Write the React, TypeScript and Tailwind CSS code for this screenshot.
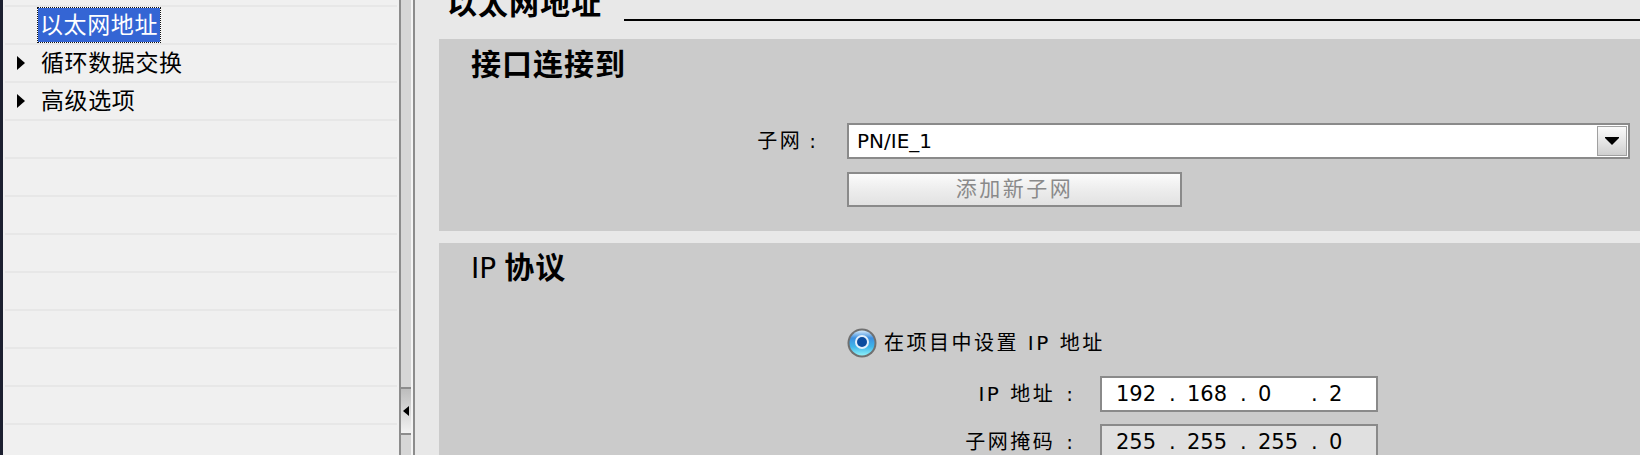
import React from "react";

const treeItems = [
  { label: "以太网地址", selected: true, caret: false },
  { label: "循环数据交换", selected: false, caret: true },
  { label: "高级选项", selected: false, caret: true },
];

function Caret() {
  return (
    <svg width="8" height="14" viewBox="0 0 8 14" className="shrink-0">
      <path d="M0 0L8 7L0 14Z" fill="#000" />
    </svg>
  );
}

function TreeRow({ label, selected, caret }: { label: string; selected: boolean; caret: boolean }) {
  return (
    <div className="flex h-[38px] items-center border-b-2 border-[#e7e7e7] pl-[12px]">
      {caret ? <Caret /> : <span className="w-[8px]" />}
      {selected ? (
        <span className="ml-[12px] flex h-[36px] items-center bg-white">
          <span className="flex h-full items-center border border-dotted border-[#111] bg-[#3465d4] bg-clip-padding px-[2px] text-[23px] leading-none tracking-[0.6px] text-white">
            {label}
          </span>
        </span>
      ) : (
        <span className="ml-[16px] text-[23px] leading-none tracking-[0.6px]">{label}</span>
      )}
    </div>
  );
}

function Octets({ parts }: { parts: string[] }) {
  return (
    <div className="flex items-center pl-[14px] font-['DejaVu_Sans',sans-serif] text-[21px] leading-none">
      {parts.map((p, i) => (
        <React.Fragment key={i}>
          <span className="w-[53px]">{p}</span>
          {i < parts.length - 1 && <span className="w-[18px]">.</span>}
        </React.Fragment>
      ))}
    </div>
  );
}

function Radio() {
  return (
    <svg width="30" height="30" viewBox="0 0 30 30" className="shrink-0">
      <defs>
        <linearGradient id="radioFill" x1="0" y1="0" x2="0" y2="1">
          <stop offset="0" stopColor="#d6ebfb" />
          <stop offset="0.3" stopColor="#3c8fe0" />
          <stop offset="0.65" stopColor="#3fb6ea" />
          <stop offset="1" stopColor="#8ef0f8" />
        </linearGradient>
      </defs>
      <circle cx="15" cy="15" r="14.5" fill="#707070" />
      <circle cx="15" cy="15" r="12.5" fill="url(#radioFill)" />
      <circle cx="15" cy="14" r="7" fill="#e3f1fc" />
      <circle cx="15" cy="14" r="5" fill="#0b4c9e" />
    </svg>
  );
}

export default function App() {
  return (
    <div className="flex h-[455px] w-[1640px] overflow-hidden bg-[#e8e8e8] font-['DejaVu_Sans','Noto_Sans_CJK_SC',sans-serif] text-black">
      {/* project tree */}
      <nav className="w-[399px] shrink-0 border-l-[3px] border-[#1c2030] bg-[#f0f0f0] px-[2px]">
        <div className="h-[7px] border-b-2 border-[#e7e7e7]" />
        {treeItems.map((item) => (
          <TreeRow key={item.label} {...item} />
        ))}
        {Array.from({ length: 10 }).map((_, i) => (
          <div key={i} className="h-[38px] border-b-2 border-[#e7e7e7]" />
        ))}
      </nav>

      {/* splitter */}
      <div className="flex shrink-0">
        <div className="w-[2px] bg-[#8c8c8c]" />
        <div className="w-[10px] bg-[#d6d6d6] pt-[387px]">
          <div className="flex h-[48px] items-center justify-center border-y-2 border-[#8c8c8c] bg-linear-to-b from-[#bdbdbd] to-[#f2f2f2]">
            <svg width="6" height="10" viewBox="0 0 6 10">
              <path d="M6 0L0 5L6 10Z" fill="#000" />
            </svg>
          </div>
        </div>
        <div className="w-[2px] bg-[#f4f4f4]" />
        <div className="w-[2px] bg-[#8c8c8c]" />
      </div>

      {/* properties */}
      <main className="min-w-0 flex-1 pl-[24px]">
        <div className="-mt-[11px] flex items-end pl-[8px]">
          <h1 className="text-[30px] font-bold leading-[30px] tracking-[1px]">以太网地址</h1>
          <div className="mb-[-2px] ml-[22px] h-[2px] flex-1 bg-black" />
        </div>

        <section className="mt-[20px] h-[192px] bg-[#cbcbcb] pl-[32px] pt-[11px]">
          <h2 className="text-[30px] font-bold leading-[30px] tracking-[1px]">接口连接到</h2>
          <div className="mt-[43px] flex items-center">
            <div className="flex w-[345px] justify-end text-[20px] leading-none tracking-[2.5px]">
              <span>子网</span>
              <span className="ml-[7px] tracking-normal">:</span>
            </div>
            <div className="ml-[31px] flex h-[36px] w-[783px] items-stretch border-2 border-[#8a8a8a] bg-white">
              <div className="flex flex-1 items-center pl-[8px] font-['DejaVu_Sans',sans-serif] text-[20px] leading-none">
                PN/IE_1
              </div>
              <div className="m-[1px] flex w-[30px] items-center justify-center border border-[#a0a0a0] bg-linear-to-b from-[#fafafa] via-[#e6e6e6] to-[#cfcfcf]">
                <svg width="14" height="8" viewBox="0 0 14 8">
                  <path d="M0 0H14V1L7 8L0 1Z" fill="#000" />
                </svg>
              </div>
            </div>
          </div>
          <button className="ml-[376px] mt-[13px] flex h-[35px] w-[335px] items-center justify-center border-2 border-[#8a8a8a] bg-linear-to-b from-[#fbfbfb] via-[#ededed] to-[#e2e2e2] text-[21px] leading-none tracking-[2.5px] text-[#8a8a8a]">
            添加新子网
          </button>
        </section>

        <section className="mt-[12px] h-[230px] bg-[#cbcbcb] pl-[32px] pt-[10px]">
          <h2 className="flex items-baseline text-[30px] font-bold leading-[30px] tracking-[1px]">
            <span className="text-[28px] font-normal tracking-normal">IP</span>
            <span className="ml-[8px]">协议</span>
          </h2>
          <div className="ml-[376px] mt-[44px] flex h-[30px] items-center">
            <Radio />
            <span className="ml-[7px] text-[20px] leading-none tracking-[2.5px]">在项目中设置 IP 地址</span>
          </div>
          <div className="mt-[18px] flex items-center">
            <div className="flex w-[602px] justify-end text-[20px] leading-none tracking-[2.5px]">
              <span>IP 地址</span>
              <span className="ml-[11px] tracking-normal">:</span>
            </div>
            <div className="ml-[27px] flex h-[36px] w-[278px] items-center border-2 border-[#8a8a8a] bg-white">
              <Octets parts={["192", "168", "0", "2"]} />
            </div>
          </div>
          <div className="mt-[12px] flex items-center">
            <div className="flex w-[602px] justify-end text-[20px] leading-none tracking-[2.5px]">
              <span>子网掩码</span>
              <span className="ml-[11px] tracking-normal">:</span>
            </div>
            <div className="ml-[27px] flex h-[36px] w-[278px] items-center border-2 border-[#8a8a8a] bg-[#e0e0e0]">
              <Octets parts={["255", "255", "255", "0"]} />
            </div>
          </div>
        </section>
      </main>
    </div>
  );
}
